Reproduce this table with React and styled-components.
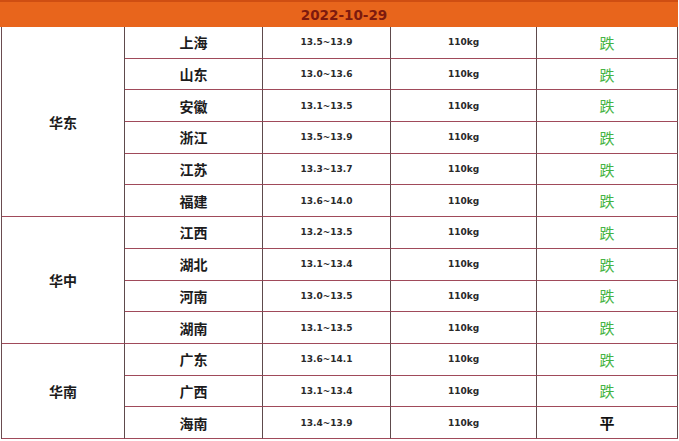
import React from "react";
import styled, { createGlobalStyle } from "styled-components";

const GlobalStyle = createGlobalStyle`
  html, body {
    margin: 0;
    padding: 0;
    background: #ffffff;
  }
  body {
    font-family: "Noto Sans CJK SC", "DejaVu Sans", sans-serif;
  }
`;

// each region with its provinces, price range and trend
const regions = [
  {
    name: "华东",
    rows: [
      ["上海", "13.5~13.9", "跌"],
      ["山东", "13.0~13.6", "跌"],
      ["安徽", "13.1~13.5", "跌"],
      ["浙江", "13.5~13.9", "跌"],
      ["江苏", "13.3~13.7", "跌"],
      ["福建", "13.6~14.0", "跌"],
    ],
  },
  {
    name: "华中",
    rows: [
      ["江西", "13.2~13.5", "跌"],
      ["湖北", "13.1~13.4", "跌"],
      ["河南", "13.0~13.5", "跌"],
      ["湖南", "13.1~13.5", "跌"],
    ],
  },
  {
    name: "华南",
    rows: [
      ["广东", "13.6~14.1", "跌"],
      ["广西", "13.1~13.4", "跌"],
      ["海南", "13.4~13.9", "平"],
    ],
  },
];

const App = () => {
  return (
    <>
      <GlobalStyle />
      <Page>
        <Grid>
          <Header>2022-10-29</Header>
          {regions.map((region) => (
            <React.Fragment key={region.name}>
              <RegionCell $span={region.rows.length}>{region.name}</RegionCell>
              {region.rows.map(([province, price, trend]) => (
                <React.Fragment key={province}>
                  <ProvinceCell>{province}</ProvinceCell>
                  <NumberCell>{price}</NumberCell>
                  <NumberCell>110kg</NumberCell>
                  <TrendCell $down={trend === "跌"}>{trend}</TrendCell>
                </React.Fragment>
              ))}
            </React.Fragment>
          ))}
        </Grid>
      </Page>
    </>
  );
};

const Page = styled.div`
  width: 679px;
  height: 441px;
  padding: 0 0 0 1px;
  box-sizing: border-box;
  background: #ffffff;
`;

const Grid = styled.div`
  display: grid;
  width: 676px;
  grid-template-columns: 123px 138px 128px 146px 141px;
  grid-template-rows: 27px repeat(13, 31.7px);
  border-left: 1px solid #6a4c50;
  box-sizing: border-box;
`;

const Header = styled.div`
  grid-column: 1 / -1;
  background: #e8651c;
  border-top: 2px solid #cf4e12;
  margin-left: -2px;
  display: flex;
  align-items: center;
  justify-content: center;
  font-family: "DejaVu Sans", sans-serif;
  font-weight: bold;
  font-size: 13.5px;
  color: #7d1a0e;
  box-sizing: border-box;
  padding-left: 10px;
`;

const Cell = styled.div`
  display: flex;
  align-items: center;
  justify-content: center;
  border-right: 1px solid #5e4a4c;
  border-bottom: 1px solid #a04a5a;
  box-sizing: border-box;
  color: #1c1c1c;
`;

const RegionCell = styled(Cell)`
  grid-row: span ${(p) => p.$span};
  font-size: 14px;
  font-weight: 600;
`;

const ProvinceCell = styled(Cell)`
  font-size: 14px;
  font-weight: 600;
`;

const NumberCell = styled(Cell)`
  font-family: "DejaVu Sans", sans-serif;
  font-weight: bold;
  font-size: 9px;
  color: #2a2a2a;
`;

const TrendCell = styled(Cell)`
  font-size: 15px;
  font-weight: ${(p) => (p.$down ? 400 : 700)};
  color: ${(p) => (p.$down ? "#45b444" : "#111111")};
`;

export default App;
